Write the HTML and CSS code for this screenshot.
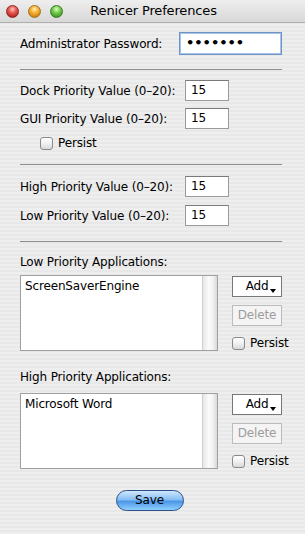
FILE: index.html
```html
<!DOCTYPE html>
<html lang="en">
<head>
  <meta charset="UTF-8" />
  <title>Renicer Preferences</title>
  <link rel="stylesheet" href="styles.css">
</head>
<body>
  <div class="window">
    <!-- Title bar -->
    <div class="titlebar">
      <div class="lights">
        <span class="light red"></span>
        <span class="light yellow"></span>
        <span class="light green"></span>
      </div>
      <div class="title">Renicer Preferences</div>
    </div>

    <div class="content">
      <div class="row pw-row">
        <span class="label">Administrator Password:</span>
        <div class="field password">&bull;&bull;&bull;&bull;&bull;&bull;&bull;</div>
      </div>

      <div class="sep sep-1"></div>

      <div class="row value-row dock-row">
        <span class="label value-label">Dock Priority Value (0–20):</span>
        <div class="field small">15</div>
      </div>
      <div class="row value-row gui-row">
        <span class="label value-label">GUI Priority Value (0–20):</span>
        <div class="field small">15</div>
      </div>
      <div class="check-row gui-persist">
        <span class="checkbox"></span>
        <span class="check-label">Persist</span>
      </div>

      <div class="sep sep-2"></div>

      <div class="row value-row high-row">
        <span class="label value-label">High Priority Value (0–20):</span>
        <div class="field small">15</div>
      </div>
      <div class="row value-row low-row">
        <span class="label value-label">Low Priority Value (0–20):</span>
        <div class="field small">15</div>
      </div>

      <div class="sep sep-3"></div>

      <div class="section-label low-label">Low Priority Applications:</div>
      <div class="app-section low-apps">
        <div class="listbox">
          <div class="list-items">
            <div class="list-item">ScreenSaverEngine</div>
          </div>
          <div class="scroll-track"></div>
        </div>
        <div class="side">
          <div class="btn add-btn">Add <span class="caret"></span></div>
          <div class="btn del-btn">Delete</div>
          <div class="check-row side-check">
            <span class="checkbox"></span>
            <span class="check-label">Persist</span>
          </div>
        </div>
      </div>

      <div class="section-label high-label">High Priority Applications:</div>
      <div class="app-section high-apps">
        <div class="listbox">
          <div class="list-items">
            <div class="list-item">Microsoft Word</div>
          </div>
          <div class="scroll-track"></div>
        </div>
        <div class="side">
          <div class="btn add-btn">Add <span class="caret"></span></div>
          <div class="btn del-btn">Delete</div>
          <div class="check-row side-check">
            <span class="checkbox"></span>
            <span class="check-label">Persist</span>
          </div>
        </div>
      </div>

      <div class="save-row">
        <div class="save-btn">Save</div>
      </div>
    </div>
  </div>
</body>
</html>
```

FILE: styles.css
```css
* {
  margin: 0; padding: 0; box-sizing: border-box;
}

body {
  font-family: 'DejaVu Sans', 'Liberation Sans', sans-serif;
  font-size: 12px;
  letter-spacing: -0.15px;
  color: #000;
  background: #ececec;
}

.window {
  width: 305px;
  height: 534px;
  overflow: hidden;
  background: repeating-linear-gradient(to bottom, #eeeeee 0, #eeeeee 2px, #e8e8e8 2px, #e8e8e8 4px);
}

/* title bar */
.titlebar {
  height: 23px;
  display: flex;
  align-items: center;
  background: linear-gradient(to bottom, #eeeeee, #d8d8d8);
  border-bottom: 1px solid #b0b0b0;
  position: relative;
}

.lights {
  display: flex;
  gap: 9px;
  padding-left: 6px;
  padding-top: 1px;
}

.light {
  width: 13px;
  height: 13px;
  border-radius: 50%;
  display: block;
}

.light.red {
  background: radial-gradient(circle at 50% 30%, #ffc8c0 0, #e8615a 35%, #b8231c 80%);
  border: 1px solid #8e2a26;
}

.light.yellow {
  background: radial-gradient(circle at 50% 30%, #fff0c0 0, #f8b73e 35%, #d1810a 80%);
  border: 1px solid #a0701e;
}

.light.green {
  background: radial-gradient(circle at 50% 30%, #e0ffc8 0, #7cd154 35%, #3f9a1e 80%);
  border: 1px solid #3e7a28;
}

.title {
  position: absolute;
  left: 0;
  right: 0;
  top: 3px;
  text-align: center;
  font-size: 13px;
  padding-left: 2px;
}

/* content */
.content {
  padding: 0 23px 0 20px;
}

.row {
  display: flex;
  align-items: center;
}

.label {
  white-space: nowrap;
}

.pw-row {
  margin-top: 9px;
  height: 23px;
  justify-content: space-between;
}

.field {
  background: #fff;
  border: 1px solid #9a9a9a;
  border-top-color: #7a7a7a;
  height: 21px;
  line-height: 19px;
  padding-left: 5px;
}

.field.password {
  width: 103px;
  height: 23px;
  line-height: 19px;
  font-size: 13px;
  font-weight: bold;
  letter-spacing: 0;
  border: 1px solid #6f93c4;
  box-shadow: inset 0 0 0 1px #a8c4e8;
  padding-left: 6px;
}

.value-label {
  width: 165px;
}

.field.small {
  width: 44px;
  flex-shrink: 0;
}

.value-row {
  height: 21px;
}

.dock-row { margin-top: 10px; }
.gui-row { margin-top: 7px; }
.high-row { margin-top: 11px; }
.low-row { margin-top: 8px; }

.sep {
  height: 1px;
  background: #8e8e8e;
}

.sep-1 { margin-top: 14px; }
.sep-2 { margin-top: 14px; }
.sep-3 { margin-top: 15px; }

.check-row {
  display: flex;
  align-items: center;
  gap: 5px;
  height: 14px;
}

.gui-persist {
  margin-top: 7px;
  padding-left: 20px;
}

.checkbox {
  width: 13px;
  height: 13px;
  flex-shrink: 0;
  border: 1px solid #8a8a8a;
  border-radius: 3px;
  background: linear-gradient(to bottom, #ffffff, #f0f0f0 50%, #d8d8d8);
  display: block;
}

/* application lists */
.section-label {
  height: 16px;
  line-height: 16px;
}

.low-label { margin-top: 12px; }
.high-label { margin-top: 18px; }

.app-section {
  display: flex;
  justify-content: space-between;
  align-items: flex-start;
}

.low-apps { margin-top: 5px; }
.high-apps { margin-top: 8px; }

.listbox {
  width: 198px;
  height: 76px;
  border: 1px solid #a0a0a0;
  background: #fff;
  display: flex;
}

.list-items {
  flex: 1;
  padding: 2px 4px;
}

.list-item {
  line-height: 16px;
}

.scroll-track {
  width: 15px;
  background: linear-gradient(to right, #e6e6e6, #fbfbfb 40%, #f2f2f2 70%, #d8d8d8);
  border-left: 1px solid #d0d0d0;
}

.side {
  width: 50px;
  display: flex;
  flex-direction: column;
  padding-top: 1px;
}

.btn {
  height: 21px;
  line-height: 19px;
  text-align: center;
  font-size: 12px;
}

.add-btn {
  background: #fff;
  border: 1px solid #777;
  padding-left: 8px;
}

.caret {
  display: inline-block;
  width: 0;
  height: 0;
  border-left: 3px solid transparent;
  border-right: 3px solid transparent;
  border-top: 4px solid #000;
  vertical-align: -3px;
  margin-left: -2px;
}

.del-btn {
  margin-top: 8px;
  background: #f4f4f4;
  border: 1px solid #bcbcbc;
  color: #9c9c9c;
}

.side-check {
  margin-top: 10px;
  gap: 5px;
}

/* save button */
.save-row {
  margin-top: 21px;
  display: flex;
  justify-content: center;
}

.save-btn {
  width: 68px;
  height: 21px;
  line-height: 19px;
  text-align: center;
  border-radius: 11px;
  border: 1px solid #2c4f86;
  background: linear-gradient(to bottom, #cfe7ff 0, #86bff4 45%, #4b96e6 55%, #8fd0ff 100%);
  margin-left: -3px;
}
```
